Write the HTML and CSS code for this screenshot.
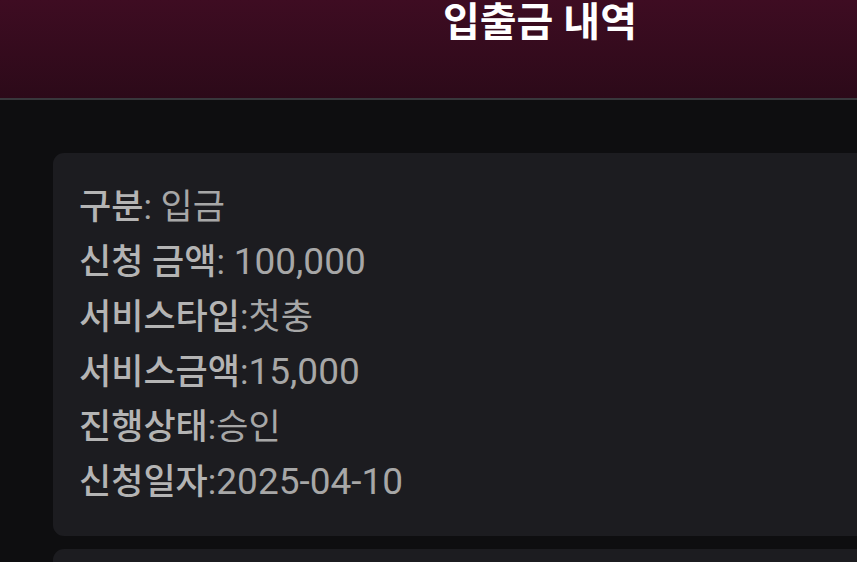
FILE: index.html
```html
<!DOCTYPE html>
<html lang="ko">
<head>
<meta charset="utf-8">
<link rel="stylesheet" href="styles.css">
</head>
<body>
<div class="page">
  <header class="topbar">
    <h1 class="title">입출금 내역</h1>
  </header>
  <main class="list">
    <section class="card">
      <p class="row"><b>구분</b>: 입금</p>
      <p class="row"><b>신청 금액</b>: <span class="num">100,000</span></p>
      <p class="row"><b>서비스타입</b>:첫충</p>
      <p class="row"><b>서비스금액</b>:<span class="num">15,000</span></p>
      <p class="row"><b>진행상태</b>:승인</p>
      <p class="row"><b>신청일자</b>:<span class="num">2025-04-10</span></p>
    </section>
    <section class="card"></section>
  </main>
</div>
</body>
</html>
```

FILE: styles.css
```css
html, body {
  margin: 0;
  padding: 0;
  background: #0e0e10;
  overflow: hidden;
}
.page {
  width: 1080px;
  font-family: Roboto, "Noto Sans CJK KR", sans-serif;
}
.topbar {
  height: 98px;
  background: linear-gradient(180deg, #3e0c22 0%, #2c0a19 100%);
  border-bottom: 2px solid #38383c;
  display: flex;
  justify-content: center;
  align-items: flex-start;
}
.title {
  margin: 0;
  margin-top: -5px;
  color: #ffffff;
  font-size: 40px;
  font-weight: 700;
  line-height: 56px;
}
.list {
  padding: 53px 53px 0;
  display: flex;
  flex-direction: column;
  gap: 13px;
}
.card {
  background: #1c1c20;
  border-radius: 11px;
  padding: 27px 26px 26px;
  min-height: 100px;
}
.row {
  margin: 0;
  color: #a7a7a7;
  font-size: 35px;
  line-height: 55px;
  font-weight: 400;
}
.row b {
  font-weight: 500;
  color: #b4b4b4;
}
.num {
  font-size: 37px;
  line-height: 48px;
}
```
